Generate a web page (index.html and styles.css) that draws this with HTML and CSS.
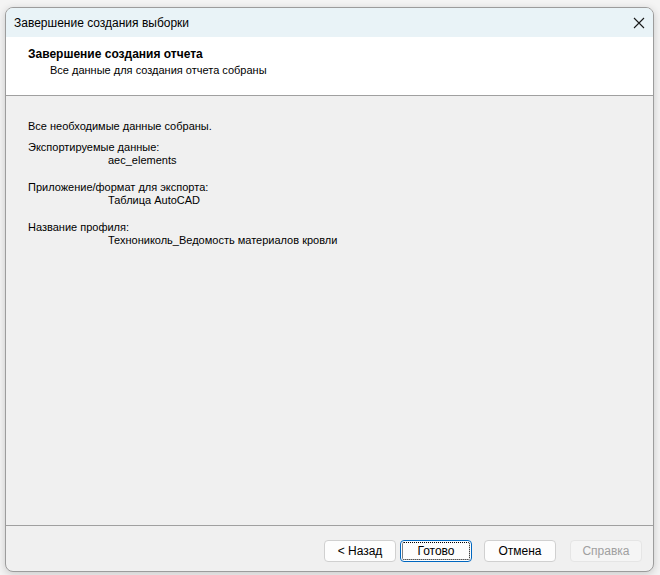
FILE: index.html
```html
<!DOCTYPE html>
<html lang="ru">
<head>
<meta charset="utf-8">
<link rel="stylesheet" href="styles.css">
</head>
<body>
<div class="desktop">
  <div class="window">
    <div class="titlebar">
      <span class="title">Завершение создания выборки</span>
      <svg class="close" width="12" height="12" viewBox="0 0 12 12"><path d="M1 1 L11 11 M11 1 L1 11" stroke="#1a1a1a" stroke-width="1.1" fill="none"/></svg>
    </div>
    <div class="header">
      <div class="h-title">Завершение создания отчета</div>
      <div class="h-sub">Все данные для создания отчета собраны</div>
    </div>
    <div class="content">
      <div class="line">Все необходимые данные собраны.</div>
      <div class="group">
        <div class="label">Экспортируемые данные:</div>
        <div class="value">aec_elements</div>
      </div>
      <div class="group">
        <div class="label">Приложение/формат для экспорта:</div>
        <div class="value">Таблица AutoCAD</div>
      </div>
      <div class="group">
        <div class="label">Название профиля:</div>
        <div class="value">Технониколь_Ведомость материалов кровли</div>
      </div>
    </div>
    <div class="footer">
      <button class="btn">&lt; Назад</button>
      <button class="btn focus">Готово</button>
      <button class="btn gap">Отмена</button>
      <button class="btn disabled gap2">Справка</button>
    </div>
  </div>
</div>
</body>
</html>
```
FILE: styles.css
```css
html, body {
  margin: 0;
  padding: 0;
}
body {
  width: 660px;
  height: 575px;
  overflow: hidden;
  background: #f4f4f4;
  font-family: "Liberation Sans", Arial, sans-serif;
  font-size: 12px;
  color: #000;
}
.desktop {
  padding: 7px 0 0 5px;
}
.window {
  width: 647px;
  height: 563px;
  border: 1px solid #9c9c9c;
  border-radius: 8px;
  background: #f0f0f0;
  display: flex;
  flex-direction: column;
  overflow: hidden;
  box-shadow: 0 2px 8px rgba(0,0,0,0.18);
}
.titlebar {
  height: 29px;
  flex: none;
  background: #e9f3f7;
  display: flex;
  align-items: center;
  justify-content: space-between;
  padding: 0 8px 0 8px;
}
.title {
  font-size: 12px;
  color: #000;
}
.header {
  flex: none;
  background: #fff;
  border-bottom: 1px solid #a0a0a0;
  padding: 10px 0 0 22px;
  box-sizing: border-box;
  height: 59px;
}
.h-title {
  font-weight: bold;
  line-height: 15px;
}
.h-sub {
  font-size: 11px;
  margin-left: 22px;
  line-height: 14px;
  margin-top: 1px;
}
.content {
  flex: 1;
  padding: 24px 0 0 22px;
  border-bottom: 1px solid #a0a0a0;
  font-size: 11px;
  line-height: 13px;
}
.line {
  margin-bottom: 8px;
}
.group {
  margin-bottom: 14px;
}
.group .value {
  margin-left: 80px;
}
.footer {
  flex: none;
  height: 45px;
  display: flex;
  align-items: flex-start;
  padding: 14px 0 0 318px;
  box-sizing: border-box;
}
.btn {
  width: 72px;
  height: 22px;
  background: #fdfdfd;
  border: 1px solid #d0d0d0;
  border-radius: 4px;
  font-family: "Liberation Sans", Arial, sans-serif;
  font-size: 12px;
  color: #000;
  padding: 0;
  margin-right: 4px;
}
.btn.focus {
  border: 1px solid #0067c0;
  outline: 1px dotted #000;
  outline-offset: -3px;
}
.btn.gap {
  margin-left: 8px;
}
.btn.gap2 {
  margin-left: 10px;
}
.btn.disabled {
  color: #a0a0a0;
  background: #f5f5f5;
  border-color: #e5e5e5;
}
```
